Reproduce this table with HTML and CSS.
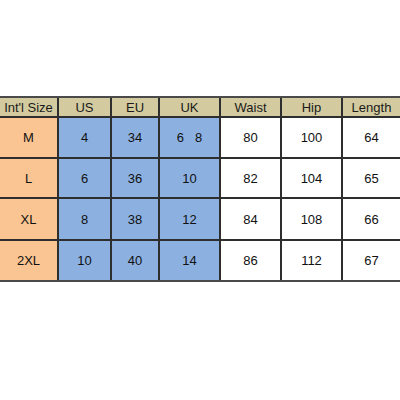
FILE: index.html
```html
<!DOCTYPE html>
<html>
<head>
<meta charset="utf-8">
<link rel="stylesheet" href="styles.css">
</head>
<body>
<div class="chart">
  <div class="cell head">Int'l Size</div>
  <div class="cell head">US</div>
  <div class="cell head">EU</div>
  <div class="cell head">UK</div>
  <div class="cell head">Waist</div>
  <div class="cell head">Hip</div>
  <div class="cell head">Length</div>

  <div class="cell size">M</div>
  <div class="cell conv">4</div>
  <div class="cell conv">34</div>
  <div class="cell conv pre">6   8</div>
  <div class="cell">80</div>
  <div class="cell">100</div>
  <div class="cell">64</div>

  <div class="cell size">L</div>
  <div class="cell conv">6</div>
  <div class="cell conv">36</div>
  <div class="cell conv">10</div>
  <div class="cell">82</div>
  <div class="cell">104</div>
  <div class="cell">65</div>

  <div class="cell size">XL</div>
  <div class="cell conv">8</div>
  <div class="cell conv">38</div>
  <div class="cell conv">12</div>
  <div class="cell">84</div>
  <div class="cell">108</div>
  <div class="cell">66</div>

  <div class="cell size">2XL</div>
  <div class="cell conv">10</div>
  <div class="cell conv">40</div>
  <div class="cell conv">14</div>
  <div class="cell">86</div>
  <div class="cell">112</div>
  <div class="cell">67</div>
</div>
</body>
</html>
```

FILE: styles.css
```css
html, body {
  margin: 0;
  padding: 0;
  background: #ffffff;
}
body {
  width: 400px;
  height: 400px;
  overflow: hidden;
  padding-top: 96px;
  box-sizing: border-box;
  font-family: "Liberation Sans", Arial, sans-serif;
}
.chart {
  display: grid;
  grid-template-columns: 57px 51px 46px 59px 59px 59px 57px;
  grid-template-rows: 18px 39px 38px 40px 39px;
  gap: 2px;
  background: #2e2e2e;
  border-top: 2px solid #4a4a4a;
  border-bottom: 2px solid #4a4a4a;
  width: 400px;
}
.cell {
  background: #ffffff;
  display: flex;
  align-items: center;
  justify-content: center;
  font-size: 13px;
  color: #111111;
}
.head {
  background: #d3cb9f;
  color: #1a1a1a;
}
.size {
  background: #fbc593;
}
.conv {
  background: #8cb1e1;
}
.pre {
  white-space: pre;
}
```
